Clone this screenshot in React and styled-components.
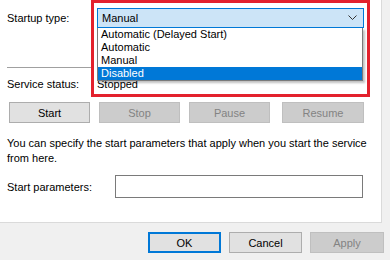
import styled, { createGlobalStyle } from "styled-components";

const GlobalStyle = createGlobalStyle`
  html, body {
    margin: 0;
    padding: 0;
    background: #f0f0f0;
  }
  body {
    font-family: "Liberation Sans", Arial, sans-serif;
    font-size: 11px;
    color: #000;
  }
`;

const Window = styled.div`
  width: 390px;
  height: 260px;
  overflow: hidden;
  background: #f0f0f0;
`;

const Panel = styled.div`
  width: 382px;
  height: 223px;
  box-sizing: border-box;
  background: #fff;
  border-right: 1px solid #dadada;
  border-bottom: 1px solid #dadada;
  padding: 8px 0 0 7px;
  display: flex;
  flex-direction: column;
`;

const Row = styled.div`
  display: flex;
  align-items: center;
  height: ${(p) => p.h || 20}px;
  margin-top: ${(p) => p.mt || 0}px;
`;

const Label = styled.div`
  width: ${(p) => p.w || 90}px;
  flex: none;
`;

const ComboWrap = styled.div`
  position: relative;
  width: 267px;
  height: 20px;
`;

const Highlight = styled.div`
  position: absolute;
  left: -6px;
  top: -8px;
  width: 279px;
  height: 97px;
  box-sizing: border-box;
  border: 3px solid #e3212d;
  pointer-events: none;
`;

const Combo = styled.div`
  position: relative;
  z-index: 2;
  height: 20px;
  box-sizing: border-box;
  background: #cce4f7;
  border: 1px solid #0078d7;
  display: flex;
  align-items: center;
  justify-content: space-between;
  padding: 0 6px 0 4px;
`;

const List = styled.ul`
  position: absolute;
  z-index: 3;
  left: 0;
  top: 20px;
  width: 266px;
  margin: 0;
  padding: 0;
  list-style: none;
  background: #fff;
  border: 1px solid #7a7a7a;
  border-top: none;
  box-sizing: border-box;
  box-shadow: 2px 2px 2px rgba(0, 0, 0, 0.25);
`;

const Item = styled.li`
  height: 13px;
  line-height: 13px;
  padding-left: 3px;
  background: ${(p) => (p.selected ? "#0078d7" : "transparent")};
  color: ${(p) => (p.selected ? "#fff" : "#000")};
`;

const Separator = styled.div`
  width: 84px;
  height: 1px;
  background: #a0a0a0;
  margin-top: 39px;
`;

const Buttons = styled.div`
  display: flex;
  gap: 9px;
  margin: 8px 0 0 2px;
`;

const Button = styled.button`
  width: ${(p) => p.w || 81}px;
  height: 21px;
  margin-left: ${(p) => p.ml || 0}px;
  box-sizing: border-box;
  padding: 0;
  font-family: inherit;
  font-size: 11px;
  background: ${(p) => (p.disabled ? "#cccccc" : "#e1e1e1")};
  color: ${(p) => (p.disabled ? "#838383" : "#000")};
  border: ${(p) =>
    p.primary ? "2px solid #0078d7" : p.disabled ? "1px solid #bfbfbf" : "1px solid #adadad"};
`;

const Description = styled.p`
  margin: 13px 0 0;
  width: 365px;
  line-height: 15px;
`;

const Input = styled.div`
  width: 248px;
  height: 23px;
  box-sizing: border-box;
  border: 1px solid #7a7a7a;
  background: #fff;
`;

const Footer = styled.div`
  display: flex;
  gap: 8px;
  padding: 9px 0 0 148px;
`;

const Chevron = () => (
  <svg width="9" height="6" viewBox="0 0 9 6">
    <path d="M0.5 0.5 L4.5 4.5 L8.5 0.5" fill="none" stroke="#333" strokeWidth="1" />
  </svg>
);

const options = ["Automatic (Delayed Start)", "Automatic", "Manual", "Disabled"];

const App = () => {
  return (
    <Window>
      <GlobalStyle />
      <Panel>
        <Row>
          <Label>Startup type:</Label>
          <ComboWrap>
            <Highlight />
            <Combo>
              <span>Manual</span>
              <Chevron />
            </Combo>
            <List>
              {options.map((o) => (
                <Item key={o} selected={o === "Disabled"}>
                  {o}
                </Item>
              ))}
            </List>
          </ComboWrap>
        </Row>
        <Separator />
        <Row mt={6}>
          <Label>Service status:</Label>
          <span>Stopped</span>
        </Row>
        <Buttons>
          <Button>Start</Button>
          <Button disabled>Stop</Button>
          <Button disabled>Pause</Button>
          <Button disabled w={82} ml={3}>
            Resume
          </Button>
        </Buttons>
        <Description>
          You can specify the start parameters that apply when you start the service
          from here.
        </Description>
        <Row h={23} mt={9}>
          <Label w={108}>Start parameters:</Label>
          <Input />
        </Row>
      </Panel>
      <Footer>
        <Button primary w={73}>
          OK
        </Button>
        <Button w={73}>Cancel</Button>
        <Button disabled w={74}>
          Apply
        </Button>
      </Footer>
    </Window>
  );
};

export default App;
